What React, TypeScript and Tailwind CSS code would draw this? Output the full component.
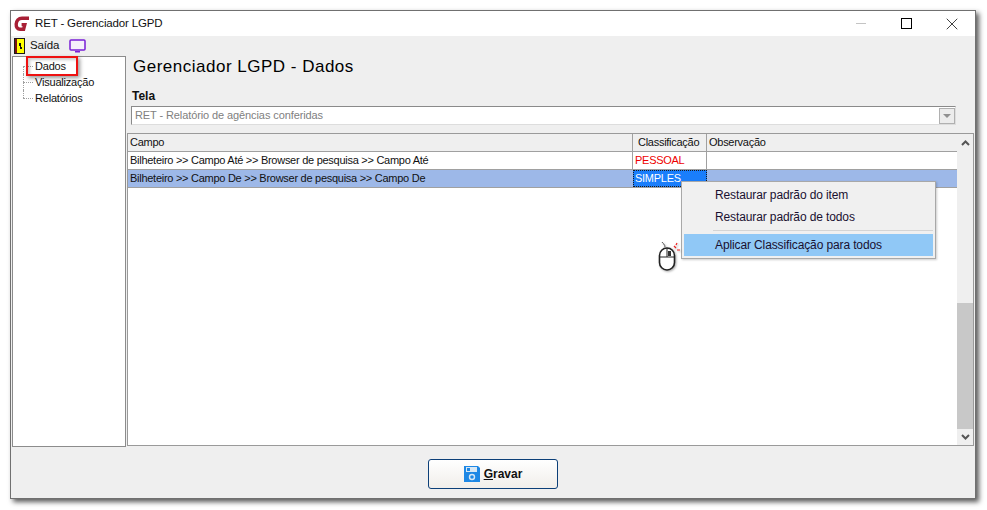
import { X } from "lucide-react";

const font = "font-['Liberation_Sans',Arial,sans-serif]";

function Logo() {
  return (
    <svg width="17" height="17" viewBox="0 0 17 17" fill="none">
      <path d="M15 3.2 H8 C4.5 3.2 2.4 6 2.2 9.2 C2 12.4 3.6 14.2 6 14.2 H9.6 L10.8 9.6 H7.6" stroke="#a81f35" strokeWidth="3.4" />
    </svg>
  );
}

function DoorIcon() {
  return (
    <svg width="11" height="16" viewBox="0 0 11 16">
      <rect x="0" y="0" width="11" height="16" fill="#1a1a1a" />
      <rect x="1" y="1" width="2" height="14" fill="#7a1010" />
      <rect x="3" y="1" width="7" height="14" fill="#ffff00" />
      <path d="M5 5h2v4h1v2H6V8H5z" fill="#111" />
    </svg>
  );
}

function MonitorIcon() {
  return (
    <svg width="17" height="15" viewBox="0 0 17 15" fill="none">
      <rect x="1" y="1" width="15" height="10" rx="1" stroke="#7a1fd6" strokeWidth="1.5" fill="#f5f0fb" />
      <rect x="6" y="12" width="5" height="1.5" fill="#7a1fd6" />
    </svg>
  );
}

function SaveIcon() {
  return (
    <svg width="16" height="16" viewBox="0 0 16 16">
      <path d="M0 0h14l2 2v14H0z" fill="#1e88e5" />
      <rect x="2" y="1" width="11" height="5" fill="#d8e8f5" />
      <rect x="3" y="2" width="3" height="3" fill="#1e88e5" />
      <circle cx="8" cy="11" r="2.5" fill="none" stroke="#d8e8f5" strokeWidth="1.4" />
    </svg>
  );
}

function MouseIcon() {
  return (
    <svg width="26" height="32" viewBox="0 0 26 32" fill="none" className="drop-shadow-[1px_1px_1px_rgba(0,0,0,0.35)]">
      <rect x="2.5" y="8" width="15" height="22" rx="7.5" fill="#fff" stroke="#222" strokeWidth="1.6" />
      <path d="M3 17h14M10 8v9" stroke="#222" strokeWidth="1" />
      <path d="M11 11h3v5h-3z" fill="#333" />
      <path d="M8 7C8 4 6 4 5 2" stroke="#555" strokeWidth="1" />
      <path d="M17 6l2 2M20 10h3M20 3l-1 2" stroke="#ee2222" strokeWidth="1.2" />
    </svg>
  );
}

function TreeItem({ label, first, last }: { label: string; first?: boolean; last?: boolean }) {
  return (
    <div className="relative flex h-4 items-center pl-[22px]">
      <span className={`absolute left-[10px] w-0 border-l border-dotted border-[#a0a0a0] ${first ? "top-2 h-2" : last ? "top-0 h-2" : "top-0 h-4"}`} />
      <span className="absolute left-[10px] top-2 w-2.5 border-t border-dotted border-[#a0a0a0]" />
      <span className="text-[11px] leading-4 tracking-[-0.2px] text-[#111]">{label}</span>
    </div>
  );
}

export default function App() {
  return (
    <div className={`${font} relative h-[510px] w-[987px] overflow-hidden bg-white pl-2.5 pt-2.5`}>
      <div className="flex h-[489px] w-[966px] flex-col border border-[#707070] bg-[#efefef] shadow-[3px_3px_5px_rgba(0,0,0,0.65)]">
        {/* title bar */}
        <div className="flex h-[25px] shrink-0 items-center bg-white pl-[3px]">
          <Logo />
          <span className="ml-1 text-[11.5px] tracking-[-0.15px] text-[#111]">RET - Gerenciador LGPD</span>
          <div className="ml-auto flex items-center">
            <span className="mr-[35px] h-0 w-2.5 border-t border-[#c4c4c4]" />
            <span className="mr-[30px] h-[11px] w-[11px] border border-black" />
            <X size={20} strokeWidth={0.9} className="mr-[13px] text-black" />
          </div>
        </div>

        {/* toolbar */}
        <div className="flex h-5 shrink-0 items-center pl-[3px]">
          <DoorIcon />
          <span className="ml-[5px] text-[11.5px] tracking-[-0.15px] text-[#111]">Saída</span>
          <span className="ml-2.5 flex"><MonitorIcon /></span>
        </div>

        {/* body */}
        <div className="flex min-h-0 flex-1">
          <div className="ml-px h-[391px] w-[114px] shrink-0 border border-[#8c8c8c] bg-white pt-px">
            <TreeItem label="Dados" first />
            <TreeItem label="Visualização" />
            <TreeItem label="Relatórios" last />
          </div>

          <div className="flex min-w-0 flex-1 flex-col">
            <div className="ml-[7px] mt-[-4px] h-[30px] text-[17px] leading-[30px] tracking-[0.5px] text-black">
              Gerenciador LGPD - Dados
            </div>
            <div className="ml-[6px] mt-[6px] text-[12px] font-bold leading-4 text-[#111]">Tela</div>
            <div className="ml-[5px] mt-[2px] flex h-[19px] w-[825px] items-center border border-[#8a8a8a] border-b-[#dddddd] border-r-[#dddddd] bg-white pl-[3px] text-[11px] tracking-[-0.1px] text-[#808080]">
              RET - Relatório de agências conferidas
              <span className="ml-auto flex h-[16px] w-4 items-center justify-center border border-[#b0b0b0] bg-[#ececec]">
                <span className="border-x-[4px] border-t-[4px] border-x-transparent border-t-[#909090]" />
              </span>
            </div>

            {/* grid */}
            <div className="ml-px mt-2 flex h-[313px] w-[847px] border border-[#9a9a9a] bg-white">
              <div className="min-w-0 flex-1 text-[11px] tracking-[-0.27px] text-[#111]">
                <div className="flex h-[18px] border-b border-[#a0a0a0] bg-[#efefef]">
                  <div className="w-[505px] border-r border-[#a0a0a0] pl-[2px] leading-[17px]">Campo</div>
                  <div className="w-[74px] border-r border-[#a0a0a0] pl-[5px] leading-[17px]">Classificação</div>
                  <div className="flex-1 pl-[2px] leading-[17px]">Observação</div>
                </div>
                <div className="flex h-[18px] border-b border-[#a0a0a0]">
                  <div className="w-[505px] border-r border-[#a0a0a0] pl-[2px] leading-[17px]">Bilheteiro &gt;&gt; Campo Até &gt;&gt; Browser de pesquisa &gt;&gt; Campo Até</div>
                  <div className="w-[74px] border-r border-[#a0a0a0] pl-[2px] leading-[17px] text-[#ee0000]">PESSOAL</div>
                </div>
                <div className="flex h-[18px] border-b border-[#a0a0a0] bg-[#9db8e8]">
                  <div className="w-[505px] pl-[2px] leading-[17px]">Bilheteiro &gt;&gt; Campo De &gt;&gt; Browser de pesquisa &gt;&gt; Campo De</div>
                  <div className="w-[74px] border border-dotted border-[#1a1a1a] bg-[#1a7efb] pl-px leading-[15px] text-white">SIMPLES</div>
                </div>
              </div>
              {/* scrollbar */}
              <div className="flex w-[16px] shrink-0 flex-col items-center bg-[#efefef]">
                <span className="flex h-[17px] items-center">
                  <svg width="9" height="6" viewBox="0 0 9 6"><path d="M1 5l3.5-3.5L8 5" fill="none" stroke="#555" strokeWidth="2" /></svg>
                </span>
                <span className="mt-auto h-[126px] w-full bg-[#c8c8c8]" />
                <span className="flex h-[16px] items-center">
                  <svg width="9" height="6" viewBox="0 0 9 6"><path d="M1 1l3.5 3.5L8 1" fill="none" stroke="#555" strokeWidth="2" /></svg>
                </span>
              </div>
            </div>
          </div>
        </div>

        {/* footer */}
        <div className="flex h-[52px] shrink-0 items-center justify-center pt-[3px]">
          <button className="flex h-[30px] w-[130px] items-center justify-center rounded-[3px] border border-[#0c3f78] bg-gradient-to-b from-white to-[#f1eeea] text-[12px] font-bold text-[#111]">
            <SaveIcon />
            <span className="ml-[4px]"><span className="underline">G</span>ravar</span>
          </button>
        </div>
      </div>

      {/* annotation over the tree */}
      <div className="absolute left-[26px] top-[56px] h-[20px] w-[52px] border-2 border-[#ee1111] shadow-[2px_2px_4px_rgba(0,0,0,0.4),inset_2px_2px_3px_rgba(0,0,0,0.2)]" />

      {/* context menu */}
      <div className="absolute left-[681px] top-[181px] w-[255px] border border-[#a8a8a8] bg-[#f0f0f0] p-[2px] text-[12px] tracking-[-0.12px] text-[#1a1030] shadow-[1px_1px_2px_rgba(0,0,0,0.2)]">
        <div className="flex h-[22px] items-center pl-[31px]">Restaurar padrão do item</div>
        <div className="flex h-[22px] items-center pl-[31px]">Restaurar padrão de todos</div>
        <div className="ml-[29px] mt-[2px] border-t border-[#d4d4d4]" />
        <div className="mt-[3px] flex h-[22px] items-center bg-[#90c8f6] pl-[31px]">Aplicar Classificação para todos</div>
      </div>

      {/* mouse cursor */}
      <div className="absolute left-[657px] top-[240px]"><MouseIcon /></div>
    </div>
  );
}
